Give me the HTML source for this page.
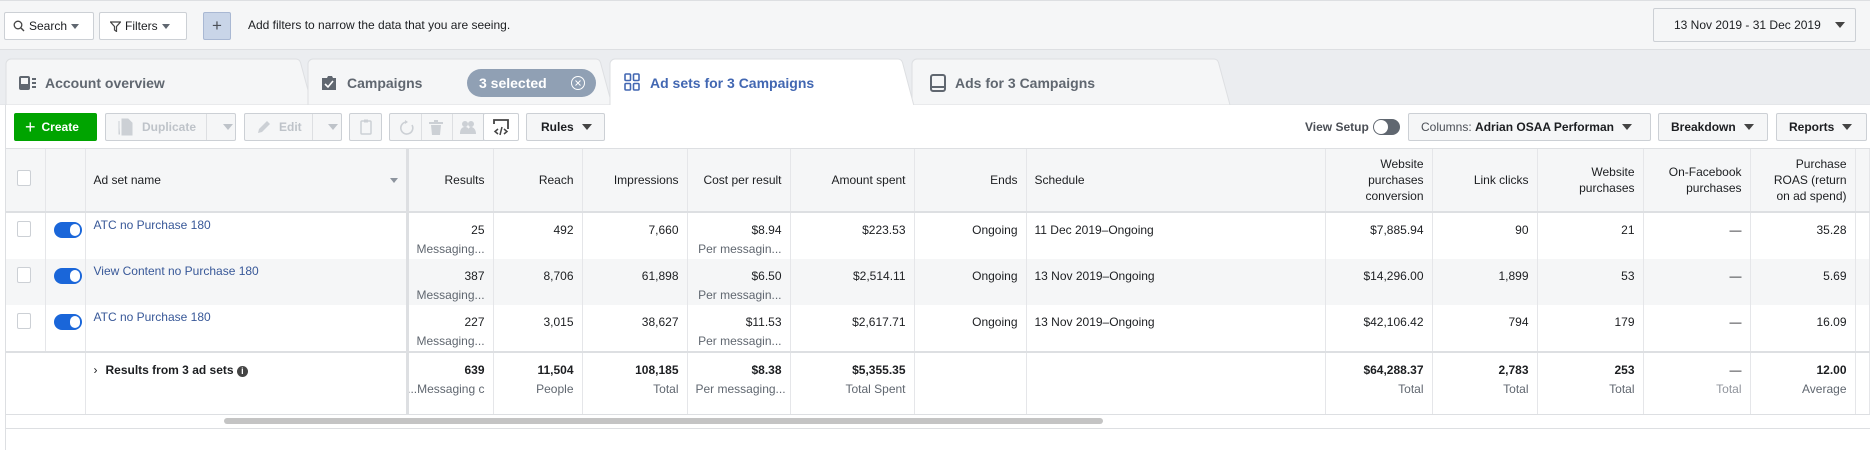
<!DOCTYPE html>
<html><head><meta charset="utf-8"><style>
*{box-sizing:border-box;margin:0;padding:0}
body{width:1870px;height:450px;overflow:hidden;background:#fff;font-family:"Liberation Sans",Arial,sans-serif;font-size:12px;color:#1c1e21;position:relative}
.a{position:absolute}
.btn{position:absolute;border:1px solid #ccd0d5;border-radius:2px;background:#f5f6f7;display:flex;align-items:center;font-size:12px;color:#4b4f56}
.tri{display:inline-block;width:0;height:0;border-left:5px solid transparent;border-right:5px solid transparent;border-top:6px solid #444;margin-left:8px}
.tris{display:inline-block;width:0;height:0;border-left:4px solid transparent;border-right:4px solid transparent;border-top:5px solid #606770;margin-left:4px}
table{position:absolute;left:6px;top:149px;border-collapse:collapse;table-layout:fixed;width:1864px}
td,th{border-right:1px solid #e5e6e9;font-weight:normal;text-align:right;padding:0 8px;vertical-align:top;white-space:nowrap;overflow:hidden;font-size:12px}
th{background:#f5f6f7;height:63px;vertical-align:middle;color:#1c1e21;border-bottom:2px solid #dddfe2;line-height:16px}
tr.r td{height:46px;padding-top:8px;line-height:19px;color:#1c1e21}
tr.r2 td{background:#f5f6f7}
.s{color:#606770}
tr.sum td{height:62px;border-top:2px solid #dddfe2;padding-top:8px;line-height:19px;font-weight:bold}
tr.sum td .s{font-weight:normal}
tr.r td.name{text-align:left;color:#385898}
.tg{display:inline-block;width:28px;height:16px;border-radius:8px;background:#1a66d9;position:relative;margin-top:1px}
.tg:after{content:"";position:absolute;right:2px;top:2px;width:10px;height:12px;border-radius:6px;background:#fff}
.cb{display:inline-block;width:13px;height:13px;border:1px solid #ccd0d5;border-radius:2px;background:#fff}
</style></head><body>
<div class="a" style="left:0;top:0;width:1870px;height:50px;background:#f5f6f7;border-top:1px solid #dddfe2;border-bottom:1px solid #dddfe2"></div>
<div class="btn" style="left:4px;top:12px;width:90px;height:28px;background:#fff;padding-left:8px;color:#1c1e21">
<svg width="12" height="12" viewBox="0 0 12 12"><circle cx="5" cy="5" r="3.8" fill="none" stroke="#444" stroke-width="1.3"/><path d="M8 8l3 3" stroke="#444" stroke-width="1.4"/></svg><span style="margin-left:4px">Search</span><span class="tris"></span></div>
<div class="btn" style="left:99px;top:12px;width:88px;height:28px;background:#fff;padding-left:10px;color:#1c1e21">
<svg width="11" height="11" viewBox="0 0 11 11"><path d="M0.5 1h10L6.5 5.5v5l-2-1.5V5.5z" fill="none" stroke="#444" stroke-width="1.2"/></svg><span style="margin-left:4px">Filters</span><span class="tris"></span></div>
<div class="btn" style="left:203px;top:12px;width:28px;height:28px;background:#c9d5e8;border-color:#a9b8d3;justify-content:center;font-size:17px;color:#4b4f56">+</div>
<div class="a" style="left:248px;top:18px;font-size:12px;color:#1c1e21">Add filters to narrow the data that you are seeing.</div>
<div class="btn" style="left:1653px;top:8px;width:203px;height:34px;background:#f5f6f7;padding-left:20px;color:#1c1e21">13 Nov 2019 - 31 Dec 2019<span class="tri" style="margin-left:14px"></span></div>
<div class="a" style="left:0;top:50px;width:1870px;height:55px;background:#ebedf0"></div>
<svg class="a" style="left:0;top:58px" width="1870" height="48">
<path d="M6 47V6a5 5 0 0 1 5-5H296a5 5 0 0 1 4.5 3.5L312 47z" fill="#f5f6f7" stroke="#dddfe2"/>
<path d="M308 47V6a5 5 0 0 1 5-5H596a5 5 0 0 1 4.5 3.5L612 47z" fill="#f5f6f7" stroke="#dddfe2"/>
<path d="M912 47V6a5 5 0 0 1 5-5H1214a5 5 0 0 1 4.5 3.5L1230 47z" fill="#f5f6f7" stroke="#dddfe2"/>
<path d="M610 48V6a5 5 0 0 1 5-5H898a5 5 0 0 1 4.5 3.5L914 48z" fill="#fff" stroke="#dddfe2"/>
<line x1="0" y1="47" x2="610" y2="47" stroke="#dddfe2"/><line x1="914" y1="47" x2="1870" y2="47" stroke="#dddfe2"/>
</svg>
<svg class="a" style="left:18px;top:75px" width="22" height="16"><rect x="1" y="1" width="11" height="14" rx="2" fill="#606770"/><rect x="3" y="3" width="7" height="6" fill="#f5f6f7"/><rect x="14" y="3" width="4" height="2" fill="#606770"/><rect x="14" y="7" width="4" height="2" fill="#606770"/><rect x="14" y="11" width="4" height="2" fill="#606770"/></svg>
<div class="a" style="left:45px;top:75px;font-size:14px;font-weight:bold;color:#606770">Account overview</div>
<svg class="a" style="left:321px;top:74px" width="16" height="17"><path d="M1 4h5l1-2h4l1 2h3v12H1z" fill="#606770"/><path d="M4 10l3 3 5-6" stroke="#fff" stroke-width="1.6" fill="none"/></svg>
<div class="a" style="left:347px;top:75px;font-size:14px;font-weight:bold;color:#606770">Campaigns</div>
<div class="a" style="left:467px;top:69px;width:129px;height:28px;border-radius:14px;background:#90a0b4;color:#fff;font-size:14px;font-weight:bold;padding:6px 0 0 12px">3 selected
<svg class="a" style="left:103px;top:6px" width="16" height="16"><circle cx="8" cy="8" r="6.5" fill="none" stroke="#fff"/><path d="M5.5 5.5l5 5M10.5 5.5l-5 5" stroke="#fff"/></svg></div>
<svg class="a" style="left:624px;top:73px" width="16" height="18"><g fill="none" stroke="#4267b2" stroke-width="1.6"><rect x="1" y="1" width="5.5" height="6.5" rx="1"/><rect x="9.5" y="1" width="5.5" height="6.5" rx="1"/><rect x="1" y="10.5" width="5.5" height="6.5" rx="1"/><rect x="9.5" y="10.5" width="5.5" height="6.5" rx="1"/></g></svg>
<div class="a" style="left:650px;top:75px;font-size:14px;font-weight:bold;color:#4267b2">Ad sets for 3 Campaigns</div>
<svg class="a" style="left:930px;top:74px" width="16" height="18"><rect x="1" y="1" width="14" height="16" rx="2" fill="none" stroke="#606770" stroke-width="2"/><rect x="1" y="12" width="14" height="2" fill="#606770"/></svg>
<div class="a" style="left:955px;top:75px;font-size:14px;font-weight:bold;color:#606770">Ads for 3 Campaigns</div>
<div class="a" style="left:0;top:105px;width:1870px;height:44px;background:#fff;border-left:6px solid #f5f6f7;border-bottom:1px solid #dddfe2"></div>
<div class="btn" style="left:14px;top:113px;width:83px;height:28px;background:#00a400;border-color:#00a400;color:#fff;font-weight:bold;padding-left:10px"><span style="font-size:18px;font-weight:normal;margin-right:6px;line-height:1">+</span>Create</div>
<div class="btn" style="left:105px;top:113px;width:131px;height:28px;color:#bec3c9;font-weight:bold;padding-left:10px">
<svg width="20" height="18"><path d="M3 3v13h1M6 1h6l4 4v12H6z" fill="#ccd0d5" stroke="#ccd0d5"/></svg><span style="margin-left:6px">Duplicate</span>
<span class="a" style="left:100px;top:0;height:26px;border-left:1px solid #dddfe2"></span><span class="tri a" style="left:109px;top:10px;border-top-color:#bec3c9"></span></div>
<div class="btn" style="left:244px;top:113px;width:98px;height:28px;color:#bec3c9;font-weight:bold;padding-left:12px">
<svg width="14" height="14"><path d="M1 13l1-4 8-8 3 3-8 8z" fill="#ccd0d5"/></svg><span style="margin-left:8px">Edit</span>
<span class="a" style="left:67px;top:0;height:26px;border-left:1px solid #dddfe2"></span><span class="tri a" style="left:75px;top:10px;border-top-color:#bec3c9"></span></div>
<div class="btn" style="left:349px;top:113px;width:33px;height:28px;justify-content:center"><svg width="12" height="16"><rect x="1" y="2" width="10" height="13" rx="1" fill="none" stroke="#ccd0d5" stroke-width="1.5"/><rect x="4" y="0.5" width="4" height="3" fill="#ccd0d5"/></svg></div>
<div class="btn" style="left:389px;top:113px;width:96px;height:28px">
<svg class="a" style="left:9px;top:6px" width="16" height="16"><path d="M8 2a6 6 0 1 0 5 3" fill="none" stroke="#ccd0d5" stroke-width="1.6"/><path d="M6 0l3 2-3 2z" fill="#ccd0d5"/></svg>
<span class="a" style="left:31px;top:0;height:26px;border-left:1px solid #dddfe2"></span>
<svg class="a" style="left:39px;top:6px" width="14" height="16"><rect x="0" y="2" width="14" height="2" fill="#ccd0d5"/><rect x="5" y="0" width="4" height="2" fill="#ccd0d5"/><path d="M2 5h10l-1 10H3z" fill="#ccd0d5"/></svg>
<span class="a" style="left:62px;top:0;height:26px;border-left:1px solid #dddfe2"></span>
<svg class="a" style="left:70px;top:6px" width="16" height="16"><circle cx="5" cy="4" r="3" fill="#ccd0d5"/><circle cx="11" cy="4" r="3" fill="#ccd0d5"/><path d="M0 14c0-5 2-7 5-7s5 2 5 7zM8 14c0-5 1-7 3-7s5 2 5 7z" fill="#ccd0d5"/></svg></div>
<div class="btn" style="left:483px;top:113px;width:36px;height:28px;background:#fff;justify-content:center"><svg width="18" height="18"><path d="M2 6V2h14v9" fill="none" stroke="#444" stroke-width="1.8"/><path d="M6 11l-3 2.5 3 2.5M12 11l3 2.5-3 2.5M10 9l-2 8" fill="none" stroke="#444" stroke-width="1.5"/></svg></div>
<div class="btn" style="left:526px;top:113px;width:79px;height:28px;color:#1c1e21;padding-left:14px;font-weight:bold">Rules<span class="tri"></span></div>
<div class="a" style="left:1305px;top:120px;color:#4b4f56;font-weight:bold">View Setup</div>
<div class="a" style="left:1373px;top:119px;width:27px;height:16px;border-radius:8px;background:#606770"><div class="a" style="left:1px;top:1px;width:14px;height:14px;border-radius:7px;background:#fff"></div></div>
<div class="btn" style="left:1408px;top:113px;width:243px;height:28px;padding-left:12px;color:#4b4f56">Columns:&nbsp;<span style="color:#1c1e21;font-weight:bold">Adrian OSAA Performan</span><span class="tri"></span></div>
<div class="btn" style="left:1658px;top:113px;width:110px;height:28px;padding-left:12px;color:#1c1e21;font-weight:bold">Breakdown<span class="tri"></span></div>
<div class="btn" style="left:1776px;top:113px;width:91px;height:28px;padding-left:12px;color:#1c1e21;font-weight:bold">Reports<span class="tri"></span></div>
<table>
<colgroup><col style="width:39px"><col style="width:40px"><col style="width:322px"><col style="width:86px"><col style="width:89px"><col style="width:105px"><col style="width:103px"><col style="width:124px"><col style="width:112px"><col style="width:299px"><col style="width:107px"><col style="width:105px"><col style="width:106px"><col style="width:107px"><col style="width:105px"><col></colgroup>
<tr><th style="text-align:left;padding-left:11px"><span class="cb" style="width:14px;height:16px"></span></th><th></th><th style="text-align:left;border-right:3px solid #dddfe2">Ad set name<span class="tris" style="float:right;margin-top:6px;border-top-color:#8d949e"></span></th><th>Results</th><th>Reach</th><th>Impressions</th><th>Cost per result</th><th>Amount spent</th><th>Ends</th><th style="text-align:left">Schedule</th><th>Website<br>purchases<br>conversion</th><th>Link clicks</th><th>Website<br>purchases</th><th>On-Facebook<br>purchases</th><th>Purchase<br>ROAS (return<br>on ad spend)</th><th></th></tr>
<tr class="r"><td style="text-align:left;padding-left:11px"><span class="cb" style="width:14px;height:16px"></span></td><td style="padding-left:8px;text-align:left"><span class="tg"></span></td><td class="name" style="border-right:3px solid #dddfe2;padding-top:3px">ATC no Purchase 180</td><td>25<br><span class="s">Messaging...</span></td><td>492</td><td>7,660</td><td>$8.94<br><span class="s">Per messagin...</span></td><td>$223.53</td><td>Ongoing</td><td style="text-align:left">11 Dec 2019–Ongoing</td><td>$7,885.94</td><td>90</td><td>21</td><td>—</td><td>35.28</td><td></td></tr>
<tr class="r r2"><td style="text-align:left;padding-left:11px"><span class="cb" style="width:14px;height:16px"></span></td><td style="padding-left:8px;text-align:left"><span class="tg"></span></td><td class="name" style="border-right:3px solid #dddfe2;padding-top:3px">View Content no Purchase 180</td><td>387<br><span class="s">Messaging...</span></td><td>8,706</td><td>61,898</td><td>$6.50<br><span class="s">Per messagin...</span></td><td>$2,514.11</td><td>Ongoing</td><td style="text-align:left">13 Nov 2019–Ongoing</td><td>$14,296.00</td><td>1,899</td><td>53</td><td>—</td><td>5.69</td><td></td></tr>
<tr class="r"><td style="text-align:left;padding-left:11px"><span class="cb" style="width:14px;height:16px"></span></td><td style="padding-left:8px;text-align:left"><span class="tg"></span></td><td class="name" style="border-right:3px solid #dddfe2;padding-top:3px">ATC no Purchase 180</td><td>227<br><span class="s">Messaging...</span></td><td>3,015</td><td>38,627</td><td>$11.53<br><span class="s">Per messagin...</span></td><td>$2,617.71</td><td>Ongoing</td><td style="text-align:left">13 Nov 2019–Ongoing</td><td>$42,106.42</td><td>794</td><td>179</td><td>—</td><td>16.09</td><td></td></tr>
<tr class="sum"><td style="border-right:none"></td><td></td><td style="text-align:left;border-right:3px solid #dddfe2;padding-left:8px"><span style="margin-right:8px;font-weight:normal">&#x203A;</span>Results from 3 ad sets <span style="display:inline-block;width:11px;height:11px;border-radius:6px;background:#444;color:#fff;font-size:9px;text-align:center;line-height:11px">i</span></td><td style="padding-left:0;text-overflow:clip;direction:rtl">639<br><span class="s" style="direction:ltr">Messaging c...</span></td><td>11,504<br><span class="s">People</span></td><td>108,185<br><span class="s">Total</span></td><td>$8.38<br><span class="s">Per messaging...</span></td><td>$5,355.35<br><span class="s">Total Spent</span></td><td></td><td></td><td>$64,288.37<br><span class="s">Total</span></td><td>2,783<br><span class="s">Total</span></td><td>253<br><span class="s">Total</span></td><td style="font-weight:normal">—<br><span class="s" style="color:#90949c">Total</span></td><td>12.00<br><span class="s">Average</span></td><td></td></tr>
</table>
<div class="a" style="left:6px;top:414px;width:1864px;height:15px;border-top:1px solid #dddfe2;border-bottom:1px solid #dddfe2;background:#fff"></div>
<div class="a" style="left:224px;top:418px;width:879px;height:6px;border-radius:3px;background:#c4c4c4"></div>
<div class="a" style="left:0;top:105px;width:6px;height:345px;background:#fff;border-right:1px solid #dddfe2"></div>
</body></html>
